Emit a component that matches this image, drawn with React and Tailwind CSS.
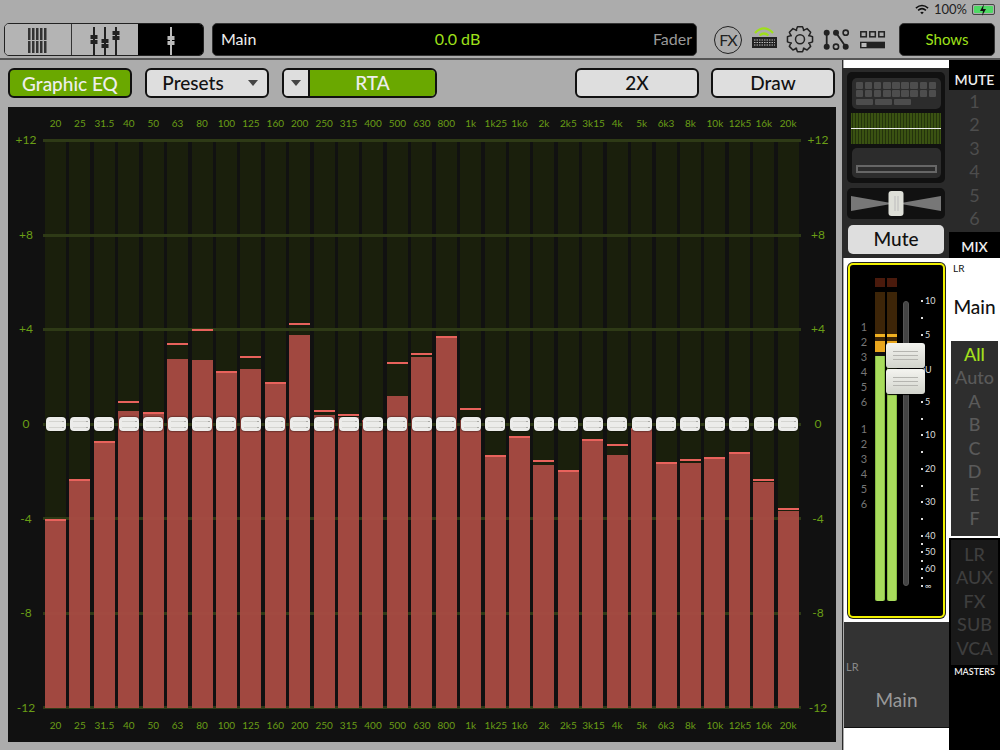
import React from 'react';

const bands = [
  ['20', 519, 519], ['25', 479, 479], ['31.5', 441, 441], ['40', 411, 401], ['50', 412, 412], ['63', 359, 343],
  ['80', 360, 329], ['100', 371, 371], ['125', 369, 356], ['160', 382, 382], ['200', 335, 323], ['250', 415, 410],
  ['315', 417, 414], ['400', 420, 420], ['500', 396, 362], ['630', 357, 353], ['800', 336, 336], ['1k', 420, 408],
  ['1k25', 455, 455], ['1k6', 436, 436], ['2k', 465, 460], ['2k5', 470, 470], ['3k15', 439, 439], ['4k', 455, 444],
  ['5k', 428, 428], ['6k3', 462, 462], ['8k', 463, 459], ['10k', 457, 457], ['12k5', 454, 452], ['16k', 482, 479],
  ['20k', 511, 508],
];
const dbLabels = ['+12', '+8', '+4', '0', '-4', '-8', '-12'];
const CHART_BOTTOM = 708;

const ticks = [
  ['10', 17], ['', 17], ['5', 17], ['', 18], ['U', 32], ['5', 17], ['', 16], ['10', 17], ['', 17], ['20', 17],
  ['', 16], ['30', 17], ['', 17], ['40', 8], ['', 8], ['50', 9], ['', 8], ['60', 9], ['', 8], ['∞', 8],
];

// 8 tooth cog outline, centre 14,16.3
function gearPath(cx, cy) {
  const pts = [];
  for (let i = 0; i < 8; i++) {
    const a = (i * Math.PI) / 4;
    [[-0.42, 9.6], [-0.2, 12.8], [0.2, 12.8], [0.42, 9.6]].forEach(([o, r]) => {
      pts.push(`${(cx + r * Math.sin(a + o)).toFixed(2)} ${(cy - r * Math.cos(a + o)).toFixed(2)}`);
    });
  }
  return `M${pts.join('L')}Z`;
}

function Btn({ children, className = '' }) {
  return (
    <button className={`h-[30px] rounded-[6px] border-2 border-[#111] bg-[#dedede] text-[19px] font-medium text-[#111] flex items-center justify-center ${className}`}>
      {children}
    </button>
  );
}

function Caret() {
  return <span className="w-0 h-0 border-x-[5px] border-x-transparent border-t-[6px] border-t-[#444]" />;
}

function FaderIcon({ x, y, color = '#222' }) {
  return (
    <g fill={color}>
      <rect x={x - 1} y="2" width="2" height="28" />
      <rect x={x - 3.5} y={y} width="7" height="4" />
      <rect x={x - 3.5} y={y + 5} width="7" height="4" />
    </g>
  );
}

function Toolbar() {
  return (
    <div className="h-[35px] flex items-start pl-[4px]">
      <div className="w-[200px] h-[33px] flex rounded-[5px] border border-[#222] overflow-hidden">
        <div className="w-[67px] bg-[#b4b4b4] border-r border-[#333] flex items-center justify-center">
          <svg width="22" height="30" viewBox="0 0 22 30">
            {[1, 5, 9, 13, 17].map(x => (
              <g key={x} fill="#333">
                <rect x={x} y="3" width="2.5" height="12" />
                <rect x={x} y="16" width="2.5" height="12" />
              </g>
            ))}
          </svg>
        </div>
        <div className="w-[66px] bg-[#b4b4b4] flex items-center justify-center">
          <svg width="34" height="30" viewBox="0 0 34 30">
            <FaderIcon x={6} y={10} />
            <FaderIcon x={17} y={14} />
            <FaderIcon x={28} y={6} />
          </svg>
        </div>
        <div className="flex-1 bg-black flex items-center justify-center">
          <svg width="12" height="30" viewBox="0 0 12 30">
            <FaderIcon x={6} y={11} color="#bbb" />
          </svg>
        </div>
      </div>
      <div className="ml-[8px] w-[485px] h-[33px] rounded-[5px] bg-black border border-[#333] flex items-center justify-between pl-[8px] pr-[4px] pb-[1px] text-[16px]">
        <span className="w-[100px] text-[#eee]">Main</span>
        <span className="ml-[2px] text-[#9fe01a]">0.0 dB</span>
        <span className="w-[100px] text-right text-[#999]">Fader</span>
      </div>
      <div className="ml-[17px] w-[28px] h-[28px] mt-[3px] rounded-full border-[1.5px] border-[#222] flex items-center justify-center text-[16px] tracking-[-1px] text-[#222]">
        FX
      </div>
      <svg className="ml-[8px]" width="28" height="33" viewBox="0 0 28 33">
        <path d="M5 10 Q14 1 23 10" fill="none" stroke="#9fe01a" strokeWidth="2.2" />
        <path d="M9.500 12.500 Q14 8.500 18.500 12.500" fill="none" stroke="#9fe01a" strokeWidth="2.2" />
        <rect x="2" y="14" width="25" height="11" fill="#222" />
        <path d="M4 17h21M4 19.500h21M4 22h21" stroke="#bbb" strokeWidth="1" strokeDasharray="1.500 1" />
      </svg>
      <svg className="ml-[8px]" width="28" height="33" viewBox="0 0 28 33">
        <path d={gearPath(14, 16.3)} fill="none" stroke="#222" strokeWidth="1.5" strokeLinejoin="round" />
        <circle cx="14" cy="16.300" r="4.500" fill="none" stroke="#222" strokeWidth="1.500" />
      </svg>
      <svg className="ml-[9px]" width="28" height="33" viewBox="0 0 28 33">
        <path d="M3.700 9.700V23.700M13 9.700L22.700 23.700" stroke="#222" strokeWidth="1.800" />
        <circle cx="3.700" cy="9.700" r="3" fill="#222" />
        <circle cx="3.700" cy="23.700" r="3" fill="#222" />
        <circle cx="13" cy="9.700" r="3" fill="#222" />
        <circle cx="22.700" cy="23.700" r="3" fill="#222" />
        <circle cx="22.700" cy="9.700" r="2.600" fill="none" stroke="#222" strokeWidth="1.600" />
        <circle cx="13" cy="23.700" r="2.600" fill="none" stroke="#222" strokeWidth="1.600" />
      </svg>
      <svg className="ml-[8px]" width="28" height="33" viewBox="0 0 28 33">
        <g fill="none" stroke="#222" strokeWidth="1.500">
          <rect x="1.800" y="8.800" width="5.500" height="5" />
          <rect x="10.800" y="8.800" width="5.500" height="5" />
          <rect x="19.800" y="8.800" width="5.500" height="5" />
        </g>
        <rect x="1" y="18.700" width="25" height="6.600" fill="#222" />
        <rect x="2.500" y="20" width="5" height="4" fill="#bbb" />
      </svg>
      <div className="ml-[12px] w-[96px] h-[33px] rounded-[5px] bg-black border border-[#333] flex items-center justify-center text-[15px] text-[#9fe01a]">
        Shows
      </div>
    </div>
  );
}

function Handle() {
  return (
    <div className="absolute left-1/2 top-1/2 -translate-x-1/2 -translate-y-1/2 w-[20px] h-[14px] rounded-[4px] bg-[#ececea] shadow-[0_0_2px_#000] flex flex-col justify-center gap-[5px] pl-[3px] pr-[2px]">
      <div className="h-px bg-[#d4d4d0] flex justify-end"><div className="w-[2px] h-px bg-[#a8a8a4]" /></div>
      <div className="h-px bg-[#d4d4d0] flex justify-end"><div className="w-[2px] h-px bg-[#a8a8a4]" /></div>
    </div>
  );
}

function FreqLabels({ className }) {
  return (
    <div className={`flex justify-between items-center px-[37px] text-[10px] text-[#6a9e16] ${className}`}>
      {bands.map(([name]) => (
        <span key={name} className="w-[21px] text-center whitespace-nowrap">{name}</span>
      ))}
    </div>
  );
}

function DbScale() {
  return (
    <div className="w-[36px] -my-[6px] flex flex-col justify-between items-center text-[12px] leading-[12px] text-[#6a9e16]">
      {dbLabels.map(l => <span key={l}>{l}</span>)}
    </div>
  );
}

function EqPanel() {
  return (
    <div className="w-[828px] h-[635px] ml-[8px] bg-[#111] flex flex-col">
      <FreqLabels className="h-[33px]" />
      <div className="h-[568px] flex">
        <DbScale />
        <div className="relative flex-1">
          <div className="absolute inset-0 px-[1px] flex justify-between">
            {bands.map(([name]) => <div key={name} className="w-[21px] h-full bg-[#1a1f0c]" />)}
          </div>
          <div className="absolute -left-px -right-px -top-px -bottom-px flex flex-col justify-between">
            {dbLabels.map(l => <div key={l} className="h-[3px] bg-[#2e3a16]" />)}
          </div>
          <div className="relative h-full px-[1px] flex justify-between">
            {bands.map(([name, top, peak]) => (
              <div key={name} className="relative w-[21px] h-full">
                <div className="absolute bottom-0 inset-x-0 bg-[#a94b43]/95" style={{ height: CHART_BOTTOM - top }} />
                <div className="absolute inset-x-0 h-[2px] bg-[#e8625c]" style={{ bottom: CHART_BOTTOM - peak - 2 }} />
              </div>
            ))}
          </div>
          <div className="absolute inset-0 px-[1px] flex justify-between">
            {bands.map(([name]) => (
              <div key={name} className="relative w-[21px] h-full"><Handle /></div>
            ))}
          </div>
        </div>
        <DbScale />
      </div>
      <FreqLabels className="h-[34px]" />
    </div>
  );
}

function MiniKeys() {
  const keys = Array.from({ length: 18 });
  return (
    <div className="w-[89px] h-[31px] rounded-[5px] bg-[#2c2c2c] px-[4px] py-[4px]">
      <div className="grid grid-cols-9 gap-[1.5px]">
        {keys.map((_, i) => <div key={i} className="h-[7px] rounded-[1px] bg-[#4d4d4d]" />)}
      </div>
      <div className="flex gap-[2px] mt-[1.5px]">
        {[0, 1, 2].map(i => <div key={i} className="w-[17px] h-[6px] rounded-[1px] bg-[#4d4d4d]" />)}
      </div>
    </div>
  );
}

function MiniEq() {
  const bars = Array.from({ length: 30 });
  return (
    <div className="relative w-[90px] h-[31px] bg-[#3a5212] flex justify-between px-[1px]">
      {bars.map((_, i) => <div key={i} className="w-px h-full bg-[#24330c]" />)}
      <div className="absolute left-0 right-0 top-[15px] h-px bg-[#eee]" />
    </div>
  );
}

function PanSlider() {
  return (
    <div className="relative w-[98px] h-[31px] rounded-[5px] bg-[#111] flex items-center justify-center mt-[5px]">
      <svg width="90" height="19" viewBox="0 0 90 19">
        <path d="M0 2 L40 9 L50 9 L90 2 L90 17 L50 10 L40 10 L0 17 Z" fill="#777" />
      </svg>
      <div className="absolute left-1/2 top-[3px] -translate-x-1/2 w-[15px] h-[25px] rounded-[3px] bg-[#dedfd8] flex justify-center gap-[2px] py-[5px]">
        <div className="w-px bg-[#bbb]" />
        <div className="w-px bg-[#bbb]" />
      </div>
    </div>
  );
}

function ChannelNums() {
  return (
    <div className="w-[12px] text-[11px] leading-[15px] text-[#777] text-center mt-[41px]">
      {[1, 2, 3, 4, 5, 6].map(n => <div key={n}>{n}</div>)}
      <div className="h-[12px]" />
      {[1, 2, 3, 4, 5, 6].map(n => <div key={`b${n}`}>{n}</div>)}
    </div>
  );
}

function Meter() {
  return (
    <div className="w-[10px] flex flex-col">
      <div className="h-[9px] bg-[#4a1a0c]" />
      <div className="h-[42px] mt-[5px] bg-[#3d2508]" />
      <div className="h-[3px] bg-[#f0b020]" />
      <div className="h-[4px] bg-[#3d2508]" />
      <div className="h-[11px] bg-[#e9a61d]" />
      <div className="h-[4px] bg-[#111]" />
      <div className="h-[245px] rounded-b-[2px] bg-[#a8dc5c] border-x border-[#86ba44]" />
    </div>
  );
}

function FaderCap() {
  return (
    <div className="w-[39px] h-[25px] rounded-[3px] bg-gradient-to-b from-[#f4f4f0] to-[#d2d4cc] flex flex-col justify-center gap-[3px] px-[7px] shadow-[0_1px_1px_#000]">
      <div className="h-px bg-[#b5b5b0]" />
      <div className="h-px bg-[#b5b5b0]" />
      <div className="h-px bg-[#b5b5b0]" />
    </div>
  );
}

function ChannelStrip() {
  return (
    <div className="relative w-[97px] h-[355px] mx-auto rounded-[5px] border-[2px] border-[#f0f000] bg-black shadow-[0_0_0_1px_#222] flex pl-[8px] pt-[13px]">
      <ChannelNums />
      <div className="ml-[5px] flex gap-[2px]">
        <Meter />
        <Meter />
      </div>
      <div className="ml-[6px] mt-[23px] w-[6px] h-[285px] rounded-[3px] bg-[#444] border border-[#555]" />
      <div className="ml-[12px] mt-[22px] flex flex-col text-[9px] text-[#ddd]">
        {ticks.map(([t, h], i) => (
          <div key={i} className="relative h-0" style={{ marginBottom: h }}>
            {t === 'U'
              ? <span className="absolute -left-[1px] -top-[2px] w-[5px] h-[5px] rounded-full border border-[#ddd]" />
              : <span className="absolute left-0 top-0 w-[2px] h-[2px] bg-[#ddd]" />}
            <span className="absolute left-[4px] -top-[4px] leading-[10px]">{t}</span>
          </div>
        ))}
      </div>
      {/* fader caps sit over the meters */}
      <div className="absolute left-[36px] top-[78px] flex flex-col gap-[1px]">
        <FaderCap />
        <FaderCap />
      </div>
    </div>
  );
}

function LeftRail() {
  return (
    <div className="w-[106px] flex flex-col">
      <div className="h-[8px] ml-[1px] bg-white" />
      <div className="h-[190px] bg-[#2a2a2a] flex flex-col items-center pt-[4px]">
        <div className="w-[98px] h-[111px] rounded-[5px] bg-[#111] flex flex-col items-center justify-center gap-[4px]">
          <MiniKeys />
          <MiniEq />
          <div className="w-[89px] h-[30px] rounded-[5px] bg-[#2c2c2c] flex items-end justify-center pb-[5px]">
            <div className="w-[81px] h-[8px] border-2 border-[#666]" />
          </div>
        </div>
        <PanSlider />
        <button className="w-[96px] h-[29px] mt-[6px] rounded-[5px] bg-[#dedede] text-[19px] font-medium text-[#111]">Mute</button>
      </div>
      <div className="h-[364px] ml-[1px] bg-white flex items-center">
        <ChannelStrip />
      </div>
      <div className="h-[106px] ml-[1px] bg-[#333] border-b border-[#111] flex flex-col pt-[38px] pl-[2px]">
        <span className="text-[11px] leading-[14px] text-[#888]">LR</span>
        <span className="mt-[12px] -ml-[2px] text-center text-[19px] text-[#999]">Main</span>
      </div>
      <div className="flex-1 ml-[1px] bg-white" />
    </div>
  );
}

function RightRail() {
  return (
    <div className="w-[51px] bg-black flex flex-col">
      <div className="h-[30px] flex items-end justify-center text-[14px] font-semibold text-[#eee]">MUTE</div>
      <div className="h-[142px] bg-[#2a2a2a] flex flex-col items-center text-[18px] leading-[23.4px] text-[#4d4d4d]">
        {[1, 2, 3, 4, 5, 6].map(n => <span key={n}>{n}</span>)}
      </div>
      <div className="h-[26px] flex items-center justify-center pt-[3px] text-[14px] font-semibold text-[#eee]">MIX</div>
      <div className="h-[280px] bg-white flex flex-col">
        <span className="pl-[4px] pt-[3px] text-[10px] leading-[14px] text-[#111]">LR</span>
        <span className="mt-[20px] text-center text-[19px] font-medium leading-[24px] text-[#111]">Main</span>
        <div className="mx-[2px] mt-[22px] h-[195px] bg-[#2e2e2e] flex flex-col items-center pt-[2px] text-[18px] font-medium leading-[23.4px] text-[#5a5a5a]">
          <span className="text-[#a4e01c]">All</span>
          {['Auto', 'A', 'B', 'C', 'D', 'E', 'F'].map(l => <span key={l}>{l}</span>)}
        </div>
      </div>
      <div className="mx-[2px] mt-[2px] h-[125px] bg-[#191919] flex flex-col items-center pt-[3px] text-[18px] font-medium leading-[23.4px] text-[#3e3e3e]">
        {['LR', 'AUX', 'FX', 'SUB', 'VCA'].map(l => <span key={l}>{l}</span>)}
      </div>
      <div className="mt-[1px] text-center text-[9px] leading-[12px] font-semibold text-[#eee]">MASTERS</div>
    </div>
  );
}

export default function App() {
  return (
    <div className="w-[1000px] h-[750px] overflow-hidden flex flex-col bg-[#acacac] font-['Lato',sans-serif]">
      <div className="h-[23px] flex items-center justify-end pb-[4px] pr-[5px] gap-[5px] text-[13px] text-[#222]">
        <svg width="14" height="11" viewBox="0 0 16 12">
          <path d="M1 4.500 Q8 -1.500 15 4.500" fill="none" stroke="#111" strokeWidth="1.700" />
          <path d="M3.500 7 Q8 3 12.500 7" fill="none" stroke="#111" strokeWidth="1.700" />
          <path d="M6 9.500 Q8 7.500 10 9.500 L8 11.500 Z" fill="#111" />
        </svg>
        <span>100%</span>
        <div className="relative w-[23px] h-[11px] rounded-[2px] border border-[#444] p-px">
          <div className="w-full h-full rounded-[1px] bg-[#4fd964]" />
          <svg className="absolute left-[6px] -top-px" width="8" height="12" viewBox="0 0 8 12">
            <path d="M5 0 L1 7 H4 L3 12 L7 5 H4 Z" fill="#111" />
          </svg>
        </div>
      </div>
      <Toolbar />
      <div className="flex-1 flex border-t-2 border-t-[#555]">
        <div className="w-[843px] flex flex-col">
          <div className="h-[47px] pt-[8px] pl-[8px] flex">
            <button className="w-[124px] h-[30px] rounded-[6px] border-2 border-[#111] bg-[#6aa800] text-[19px] font-medium text-[#eee]">Graphic EQ</button>
            <Btn className="w-[124px] ml-[13px] gap-[24px] pl-[6px]">Presets <Caret /></Btn>
            <div className="w-[155px] h-[30px] ml-[13px] rounded-[6px] border-2 border-[#111] overflow-hidden flex">
              <div className="w-[26px] bg-[#dedede] border-r-2 border-[#111] flex items-center justify-center"><Caret /></div>
              <div className="flex-1 bg-[#6aa800] text-[19px] font-medium text-[#eee] flex items-center justify-center">RTA</div>
            </div>
            <Btn className="w-[124px] ml-[138px]">2X</Btn>
            <Btn className="w-[124px] ml-[12px]">Draw</Btn>
          </div>
          <EqPanel />
        </div>
        <div className="flex-1 flex border-l border-[#2a2a2a] -ml-px">
          <LeftRail />
          <RightRail />
        </div>
      </div>
    </div>
  );
}
